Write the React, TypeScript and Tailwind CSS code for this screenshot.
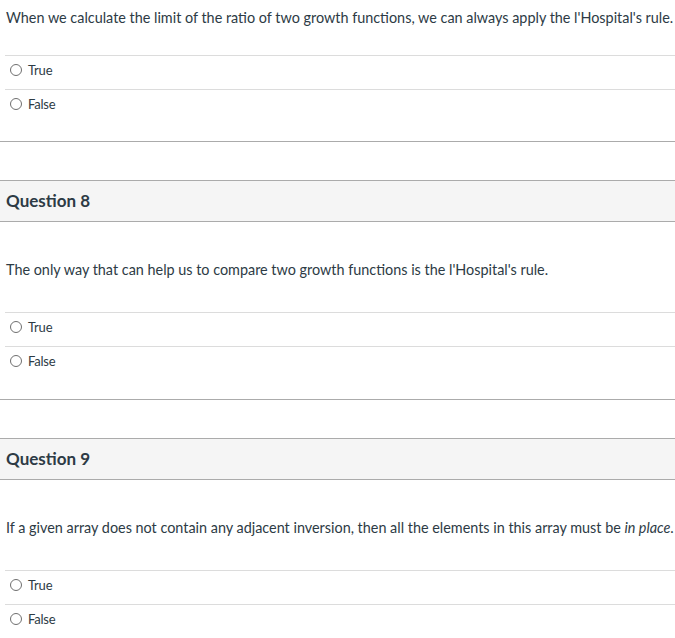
import type { ReactNode } from 'react'

const Radio = () => (
  <span className="inline-block w-[12px] h-[12px] rounded-full border border-[#6f6f6f] bg-white shrink-0" />
)

const Answer = ({ label }: { label: string }) => (
  <div className="ml-[5px] border-t border-[#dcdcdc] h-[34px] flex items-start pt-[4px]">
    <label className="flex items-center gap-[6px] pl-[5px] text-[13px] leading-[20px] text-[#2d3b45] tracking-[-0.2px]">
      <Radio />
      {label}
    </label>
  </div>
)

const Answers = () => (
  <div>
    <Answer label="True" />
    <Answer label="False" />
  </div>
)

const Question = ({ number, children }: { number: number; children: ReactNode }) => (
  <div className="border-y border-[#ababab] mb-[38px]">
    <div className="h-[41px] bg-[#f5f5f5] border-b border-[#ababab] px-[6px] flex items-center">
      <h2 className="text-[17px] font-bold text-[#2d3b45]">Question {number}</h2>
    </div>
    <div className="pt-[37px] pb-[19px]">
      <p className="px-[6px] text-[14.4px] leading-[21px] mb-[32px] whitespace-nowrap">{children}</p>
      <Answers />
    </div>
  </div>
)

export default function App() {
  return (
    <div className="w-[675px] overflow-hidden bg-white text-[#2d3b45] font-['Lato','Liberation_Sans',sans-serif]">
      {/* Question 7 (scrolled, header out of view) */}
      <div className="border-b border-[#ababab] mb-[38px]">
        <div className="pt-[7px] pb-[18px]">
          <p className="px-[6px] text-[14.4px] leading-[21px] mb-[27px] whitespace-nowrap">
            When we calculate the limit of the ratio of two growth functions, we can always apply the l'Hospital's rule.
          </p>
          <Answers />
        </div>
      </div>

      <Question number={8}>
        The only way that can help us to compare two growth functions is the l'Hospital's rule.
      </Question>

      <Question number={9}>
        If a given array does not contain any adjacent inversion, then all the elements in this array must be{' '}
        <em>in place</em>.
      </Question>
    </div>
  )
}
